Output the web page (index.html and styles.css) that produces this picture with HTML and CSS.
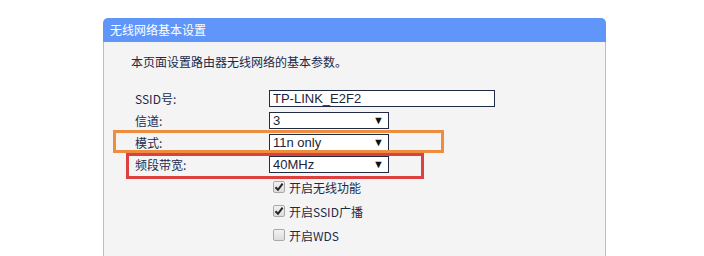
FILE: index.html
```html
<!DOCTYPE html>
<html lang="zh-CN">
<head>
    <meta charset="UTF-8">
    <title>无线网络基本设置</title>
    <link rel="stylesheet" href="styles.css">
</head>
<body>
    <div class="panel">
        <div class="panel-head">无线网络基本设置</div>
        <div class="panel-body">
            <p class="desc">本页面设置路由器无线网络的基本参数。</p>

            <div class="form">
                <div class="row">
                    <span class="label">SSID号:</span>
                    <span class="field text-field">TP-LINK_E2F2</span>
                </div>
                <div class="row">
                    <span class="label">信道:</span>
                    <span class="field select">3<span class="arrow">▼</span></span>
                </div>
                <div class="row">
                    <span class="label">模式:</span>
                    <span class="field select">11n only<span class="arrow">▼</span></span>
                </div>
                <div class="row">
                    <span class="label">频段带宽:</span>
                    <span class="field select">40MHz<span class="arrow">▼</span></span>
                </div>
            </div>

            <div class="checks">
                <div class="check-row">
                    <span class="box checked">
                        <svg width="10" height="10" viewBox="0 0 10 10"><path d="M1.5 5.2 L4 7.8 L8.6 1.6" fill="none" stroke="#262626" stroke-width="2"/></svg>
                    </span>
                    开启无线功能
                </div>
                <div class="check-row">
                    <span class="box checked">
                        <svg width="10" height="10" viewBox="0 0 10 10"><path d="M1.5 5.2 L4 7.8 L8.6 1.6" fill="none" stroke="#262626" stroke-width="2"/></svg>
                    </span>
                    开启SSID广播
                </div>
                <div class="check-row">
                    <span class="box"></span>
                    开启WDS
                </div>
            </div>
        </div>

        <!-- markierungen -->
        <div class="mark mark-mode"></div>
        <div class="mark mark-width"></div>
    </div>
</body>
</html>
```

FILE: styles.css
```css
body {
    margin: 0;
    background: white;
    font-family: "Noto Sans CJK SC", "Liberation Sans", sans-serif;
    font-size: 12px;
    color: #1b2a48;
    overflow: hidden;
}

.panel {
    position: relative;
    margin: 18px 0 0 103px;
    width: 503px;
}

.panel-head {
    height: 24px;
    line-height: 24px;
    padding-left: 7px;
    background-color: #6096fa;
    color: white;
    border-radius: 5px 5px 0 0;
}

.panel-body {
    box-sizing: border-box;
    min-height: 214px;
    background-color: #f4f4f5;
    border-left: 1px solid #e5b970;
    border-right: 1px solid #e5b970;
    padding: 10px 0 0 27px;
}

.desc {
    margin: 0;
    line-height: 20px;
}

.form {
    margin-top: 15px;
}

.row {
    display: flex;
    align-items: center;
    height: 22px;
}

.label {
    width: 134px;
    padding-left: 4px;
}

.field {
    box-sizing: border-box;
    height: 17px;
    line-height: 15px;
    border: 1px solid #1f2b45;
    background: white;
    font-family: "Liberation Sans", Arial, sans-serif;
    font-size: 13px;
    color: #1b2438;
    padding-left: 3px;
}

.text-field {
    width: 226px;
}

.select {
    position: relative;
    width: 120px;
}

.arrow {
    position: absolute;
    right: 4px;
    top: 0;
    font-size: 11px;
    color: #111;
}

.checks {
    padding-left: 142px;
}

.check-row {
    display: flex;
    align-items: center;
    gap: 4px;
    height: 24px;
}

.box {
    box-sizing: border-box;
    width: 12px;
    height: 12px;
    border: 1px solid #a9a9a9;
    border-radius: 2px;
    background: linear-gradient(#f2f2f2, #dcdcdc);
    display: flex;
    align-items: center;
    justify-content: center;
}

.mark {
    position: absolute;
    box-sizing: border-box;
    border: 3px solid;
}

.mark-mode {
    left: 10px;
    top: 112px;
    width: 331px;
    height: 23px;
    border-color: #ef8d3e;
}

.mark-width {
    left: 23px;
    top: 135px;
    width: 298px;
    height: 26px;
    border-color: #de4040;
}
```
